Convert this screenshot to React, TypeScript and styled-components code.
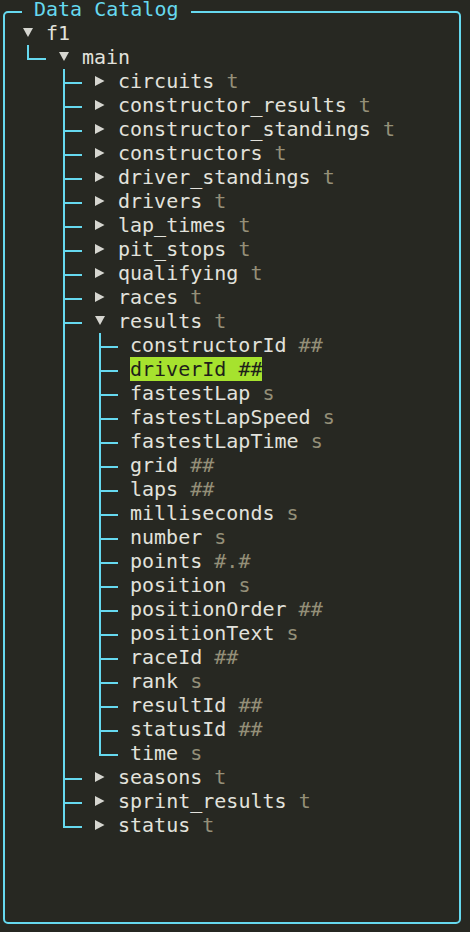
import React from 'react'
import styled, { createGlobalStyle } from 'styled-components'

const GlobalStyle = createGlobalStyle`
    html, body {
        margin: 0;
        padding: 0;
        background: #272822;
    }
    * {
        box-sizing: border-box;
    }
`

const CELL = 12
const ROW = 24

const Page = styled.div`
    width: 470px;
    height: 932px;
    padding: 11px 9px 8px 3px;
    background: #272822;
    font-family: 'DejaVu Sans Mono', 'Liberation Mono', monospace;
    font-size: 20px;
    color: #e2e2dc;
`

const Panel = styled.section`
    position: relative;
    height: 100%;
    border: 2px solid #66d9ef;
    border-radius: 5px;
    padding: 8px 0 0 17px;
`

const Title = styled.h1`
    position: absolute;
    top: -13px;
    left: 17px;
    margin: 0;
    padding: 0 ${CELL}px;
    height: 18px;
    line-height: 18px;
    font-size: 20px;
    font-weight: normal;
    color: #66d9ef;
    background: #272822;
    white-space: pre;
`

const Tree = styled.div`
    display: flex;
    flex-direction: column;
`

const Row = styled.div`
    display: flex;
    align-items: stretch;
    height: ${ROW}px;
    line-height: ${ROW}px;
    white-space: pre;
`

type GuideKind = 'tee' | 'elbow' | 'pipe' | 'blank'

const Guide = styled.span<{ $kind: GuideKind }>`
    position: relative;
    flex: 0 0 ${CELL * 3}px;
    &::before {
        content: '';
        display: ${({ $kind }) => ($kind === 'blank' ? 'none' : 'block')};
        position: absolute;
        left: 5px;
        top: 0;
        width: 2px;
        height: ${({ $kind }) => ($kind === 'elbow' ? '15px' : '100%')};
        background: #66d9ef;
    }
    &::after {
        content: '';
        display: ${({ $kind }) => ($kind === 'tee' || $kind === 'elbow' ? 'block' : 'none')};
        position: absolute;
        left: 5px;
        top: 13px;
        width: 19px;
        height: 2px;
        background: #66d9ef;
    }
`

const Toggle = styled.span`
    flex: 0 0 ${CELL * 2}px;
    display: flex;
    align-items: flex-start;
    padding: 7px 0 0 1px;
    color: #d6d6d0;
`

const Label = styled.span<{ $selected?: boolean }>`
    color: ${({ $selected }) => ($selected ? '#1e1f1a' : '#e2e2dc')};
    background: ${({ $selected }) => ($selected ? '#a6e22e' : 'transparent')};
`

const Kind = styled.span<{ $selected?: boolean }>`
    color: ${({ $selected }) => ($selected ? '#1e1f1a' : '#948f78')};
`

type Node = {
    name: string
    kind?: string
    open?: boolean
    selected?: boolean
    children?: Node[]
}

const col = (name: string, kind: string, selected = false): Node => ({ name, kind, selected })
const table = (name: string, children: Node[] = [], open = false): Node => ({
    name,
    kind: 't',
    open,
    children,
})

const results = table(
    'results',
    [
        col('constructorId', '##'),
        col('driverId', '##', true),
        col('fastestLap', 's'),
        col('fastestLapSpeed', 's'),
        col('fastestLapTime', 's'),
        col('grid', '##'),
        col('laps', '##'),
        col('milliseconds', 's'),
        col('number', 's'),
        col('points', '#.#'),
        col('position', 's'),
        col('positionOrder', '##'),
        col('positionText', 's'),
        col('raceId', '##'),
        col('rank', 's'),
        col('resultId', '##'),
        col('statusId', '##'),
        col('time', 's'),
    ],
    true
)

const catalog: Node = {
    name: 'f1',
    open: true,
    children: [
        {
            name: 'main',
            open: true,
            children: [
                table('circuits'),
                table('constructor_results'),
                table('constructor_standings'),
                table('constructors'),
                table('driver_standings'),
                table('drivers'),
                table('lap_times'),
                table('pit_stops'),
                table('qualifying'),
                table('races'),
                results,
                table('seasons'),
                table('sprint_results'),
                table('status'),
            ],
        },
    ],
}

type FlatRow = { node: Node; guides: GuideKind[]; key: string }

const flatten = (node: Node, guides: GuideKind[], out: FlatRow[], key: string) => {
    out.push({ node, guides, key })
    if (!node.open || !node.children) return out
    const carry = guides.map((g) => (g === 'tee' || g === 'pipe' ? 'pipe' : 'blank')) as GuideKind[]
    node.children.forEach((child, i) => {
        const last = i === node.children!.length - 1
        flatten(child, [...carry, last ? 'elbow' : 'tee'], out, `${key}/${child.name}`)
    })
    return out
}

const Arrow = ({ open }: { open?: boolean }) =>
    open ? (
        <svg width="10" height="9" viewBox="0 0 10 9">
            <polygon points="0,0 10,0 5,9" fill="currentColor" />
        </svg>
    ) : (
        <svg width="10" height="10" viewBox="0 0 10 10">
            <polygon points="0,0 9.5,5 0,10" fill="currentColor" />
        </svg>
    )

const App = () => {
    const rows = flatten(catalog, [], [], catalog.name)

    return (
        <React.Fragment>
            <GlobalStyle />
            <Page>
                <Panel>
                    <Title>Data Catalog</Title>
                    <Tree>
                        {rows.map(({ node, guides, key }) => (
                            <Row key={key}>
                                {guides.map((g, i) => (
                                    <Guide key={i} $kind={g} />
                                ))}
                                {node.children && (
                                    <Toggle>
                                        <Arrow open={node.open} />
                                    </Toggle>
                                )}
                                <Label $selected={node.selected}>
                                    {node.name}
                                    {node.kind && (
                                        <Kind $selected={node.selected}> {node.kind}</Kind>
                                    )}
                                </Label>
                            </Row>
                        ))}
                    </Tree>
                </Panel>
            </Page>
        </React.Fragment>
    )
}

export default App
